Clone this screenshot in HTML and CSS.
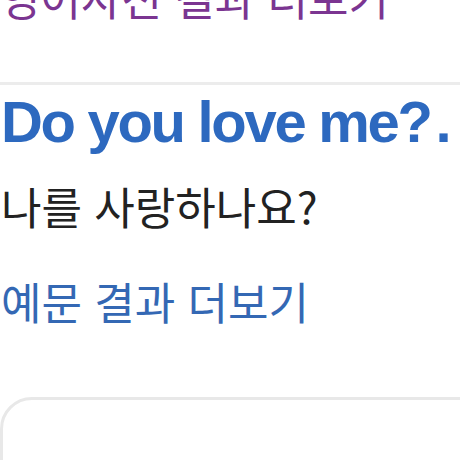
FILE: index.html
```html
<!DOCTYPE html>
<html lang="ko">
<head>
<meta charset="utf-8">
<link rel="stylesheet" href="styles.css">
</head>
<body>
<div class="top">
  <a class="more visited" href="#">영어사전 결과 더보기</a>
</div>
<div class="section">
  <div class="title">Do you love me?<span class="dot">.</span></div>
  <div class="meaning">나를 사랑하나요?</div>
  <a class="more link" href="#">예문 결과 더보기</a>
</div>
<div class="card"></div>
</body>
</html>
```

FILE: styles.css
```css
html, body {
  margin: 0;
  padding: 0;
  background: #ffffff;
  overflow: hidden;
  width: 460px;
  height: 460px;
}
body {
  font-family: "Noto Sans CJK KR", "Noto Sans", sans-serif;
}
.top {
  margin-top: -35px;
  height: 120px;
  border-bottom: 3px solid #ececec;
  box-sizing: border-box;
}
.more {
  display: block;
  font-size: 44px;
  line-height: 64px;
  text-decoration: none;
}
.visited {
  color: #7b3591;
}
.link {
  color: #3468b4;
}
.section {
  padding: 0 0 0 1px;
}
.title {
  font-family: "Liberation Sans", Arial, sans-serif;
  font-weight: bold;
  font-size: 58px;
  letter-spacing: -2.3px;
  line-height: 70px;
  color: #2d69bf;
  margin-top: 2px;
}
.dot {
  margin-left: 5px;
}
.meaning {
  font-size: 44px;
  line-height: 64px;
  color: #222222;
  margin-top: 17px;
}
.section .link {
  margin-top: 31px;
}
.card {
  margin-top: 64px;
  margin-right: -60px;
  height: 200px;
  border: 3px solid #e8e8e8;
  border-radius: 32px;
}
```
